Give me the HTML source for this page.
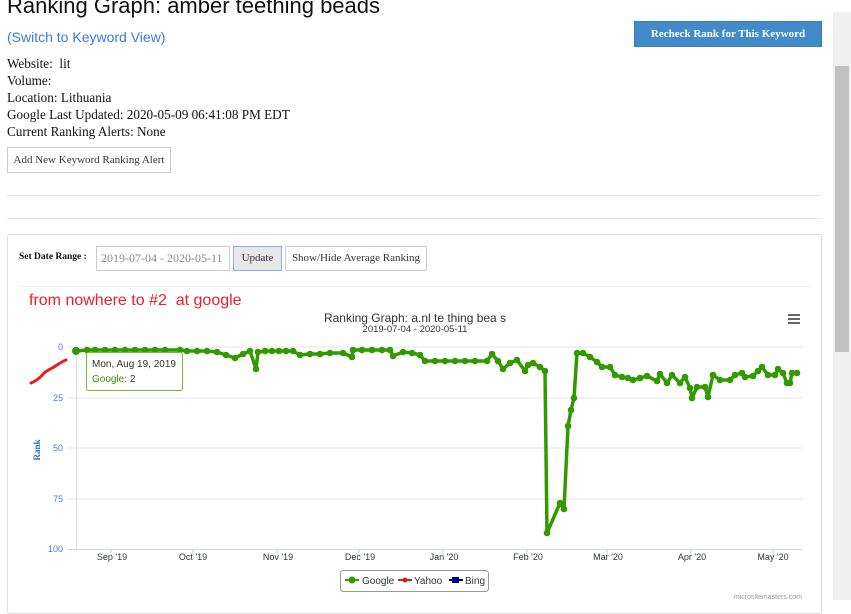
<!DOCTYPE html>
<html><head><meta charset="utf-8"><style>
html,body{margin:0;padding:0;width:851px;height:600px;overflow:hidden;background:#fff;font-family:"Liberation Serif",serif;color:#222}
.abs{position:absolute}
h1{position:absolute;left:7px;top:-7px;margin:0;font:22px "Liberation Sans",sans-serif;color:#111;white-space:nowrap}
.sw{left:7px;top:29px;font:14px "Liberation Sans",sans-serif;color:#3a7be0}
.info{left:7px;top:55px;font:13.2px/17px "Liberation Serif",serif;color:#111}
.btn{position:absolute;border:1px solid #ccc;background:#fff;font:11px "Liberation Serif",serif;color:#333;text-align:center;box-sizing:border-box}
.hr{position:absolute;left:7px;width:815px;height:1px;background:#e6e6e6}
.scroll{left:833px;top:12px;width:18px;height:588px;background:#f0f0f0}
.thumb{left:835px;top:66px;width:14px;height:286px;background:#c1c1c1}
</style></head><body>
<h1>Ranking Graph: amber teething beads</h1>
<div class="abs sw">(Switch to Keyword View)</div>
<div class="abs info">Website: &nbsp;lit<br>Volume: <br>Location: Lithuania<br>Google Last Updated: 2020-05-09 06:41:08 PM EDT<br>Current Ranking Alerts: None</div>
<div class="btn" style="left:7px;top:147px;width:164px;height:26px;line-height:24px;font-size:11px">Add New Keyword Ranking Alert</div>
<div class="abs" style="left:634px;top:21px;width:188px;height:26px;background:#428bca;border:1px solid #3a7db8;box-sizing:border-box;color:#fff;font:bold 11px 'Liberation Serif',serif;text-align:center;line-height:24px">Recheck Rank for This Keyword</div>
<div class="hr" style="top:195px"></div>
<div class="hr" style="top:218px"></div>
<div class="abs" style="left:7px;top:234px;width:815px;height:380px;border:1px solid #ddd;border-radius:3px;box-sizing:border-box"></div>
<div class="abs" style="left:19px;top:252px;font:bold 9.5px 'Liberation Serif',serif;color:#111">Set Date Range :</div>
<div class="abs" style="left:96px;top:246px;width:134px;height:25px;border:1px solid #ccc;box-sizing:border-box;font:12px 'Liberation Serif',serif;color:#888;line-height:23px;padding-left:4px">2019-07-04 - 2020-05-11</div>
<div class="btn" style="left:233px;top:246px;width:49px;height:25px;line-height:23px;background:#e8e8e8;border:1px solid #8ab0e0;font-size:11px">Update</div>
<div class="btn" style="left:285px;top:246px;width:142px;height:25px;line-height:23px;border-radius:2px;font-size:11px">Show/Hide Average Ranking</div>
<div class="hr" style="left:19px;width:791px;top:286px;background:#eee"></div>
<div class="abs" style="left:29px;top:292px;font:16px 'Liberation Sans',sans-serif;color:#e8202a">from nowhere to #2&nbsp; at google</div>
<div class="abs scroll"></div><div class="abs thumb"></div>
<svg class="abs" style="left:0;top:0" width="851" height="600">
<defs><marker id="d" markerUnits="userSpaceOnUse" markerWidth="8" markerHeight="8" refX="4" refY="4"><circle cx="4" cy="4" r="3.3" fill="#339900"/></marker></defs>
<text x="415" y="322" text-anchor="middle" font-family="Liberation Sans,sans-serif" font-size="12" fill="#333">Ranking Graph: a.nl  te  thing bea s</text>
<text x="415" y="332" text-anchor="middle" font-family="Liberation Sans,sans-serif" font-size="9.5" fill="#333">2019-07-04 - 2020-05-11</text>
<g fill="#666"><rect x="788" y="314" width="12" height="2"/><rect x="788" y="318" width="12" height="2"/><rect x="788" y="322" width="12" height="2"/></g>
<g stroke="#e6e6e6" stroke-width="1"><line x1="68" y1="347" x2="802" y2="347"/><line x1="68" y1="398" x2="802" y2="398"/><line x1="68" y1="448" x2="802" y2="448"/><line x1="68" y1="499" x2="802" y2="499"/></g>
<line x1="68" y1="549.5" x2="802" y2="549.5" stroke="#ccd6eb" stroke-width="1"/>
<line x1="76.5" y1="347" x2="76.5" y2="549" stroke="#ddd"/>
<g stroke="#ccd6eb"><line x1="111" y1="550" x2="111" y2="555"/><line x1="193" y1="550" x2="193" y2="555"/><line x1="277" y1="550" x2="277" y2="555"/><line x1="359" y1="550" x2="359" y2="555"/><line x1="443" y1="550" x2="443" y2="555"/><line x1="527" y1="550" x2="527" y2="555"/><line x1="607" y1="550" x2="607" y2="555"/><line x1="691" y1="550" x2="691" y2="555"/><line x1="773" y1="550" x2="773" y2="555"/></g>
<g font-family="Liberation Sans,sans-serif" font-size="9" fill="#4a7fd0" text-anchor="end"><text x="63" y="350">0</text><text x="63" y="401">25</text><text x="63" y="451">50</text><text x="63" y="502">75</text><text x="63" y="552">100</text></g>
<text transform="translate(40,450) rotate(-90)" text-anchor="middle" font-family="Liberation Serif,serif" font-weight="bold" font-size="9" fill="#2a6fc0">Rank</text>
<g font-family="Liberation Sans,sans-serif" font-size="9" fill="#333" text-anchor="middle"><text x="112" y="560">Sep '19</text><text x="193" y="560">Oct '19</text><text x="278" y="560">Nov '19</text><text x="360" y="560">Dec '19</text><text x="444" y="560">Jan '20</text><text x="528" y="560">Feb '20</text><text x="608" y="560">Mar '20</text><text x="692" y="560">Apr '20</text><text x="773" y="560">May '20</text></g>
<polyline fill="none" stroke="#339900" stroke-width="3.5" stroke-linejoin="round" marker-start="url(#d)" marker-mid="url(#d)" marker-end="url(#d)" points="76,351 87,350 95,350 105,350 115,350 125,350 135,350 145,350 155,350 165,350 180,350 187,351 197,351 207,351 217,352 226,355 235,358 243,354 250,351 256,369 258,352 265,351 272,351 279,351 286,351 293,351 300,355 310,354 320,354 330,353 343,353 352,357 353,350 362,350 372,350 382,350 390,350 393,356 403,352 412,353 420,355 425,361 435,361 445,361 455,361 465,361 475,361 487,361 492,354 498,361 503,369 510,363 517,360 525,371 528,365 533,363 540,367 545,371 547,533 560,503 564,509 568,426 571,410 574,398 577,353 583,353 590,357 597,362 602,367 610,367 615,375 622,377 628,378 633,380 640,378 647,376 657,381 660,374 667,383 672,375 680,383 685,377 690,388 692,398 697,387 705,387 708,397 713,375 720,380 730,380 735,375 742,373 745,377 753,376 758,371 762,367 768,375 775,375 778,369 783,373 787,383 790,383 792,373 797,373"/>
<circle cx="76" cy="351" r="4" fill="#339900"/>
<path d="M31,383 C36,381 40,378 44,373 C49,369 53,368 57,365 C60,363 63,361 66,360" stroke="#e02020" stroke-width="3" fill="none" stroke-linecap="round"/>
<rect x="86.5" y="352.5" width="96" height="38" rx="2" fill="#fff" fill-opacity="0.92" stroke="#7cb342"/>
<text x="92" y="367" font-family="Liberation Sans,sans-serif" font-size="10" fill="#333">Mon, Aug 19, 2019</text>
<text x="92" y="382" font-family="Liberation Sans,sans-serif" font-size="10" fill="#339900">Google: <tspan fill="#333">2</tspan></text>
<rect x="340.5" y="570.5" width="148" height="21" rx="3" fill="#fff" stroke="#999"/>
<g font-family="Liberation Sans,sans-serif" font-size="10" fill="#333">
<line x1="345" y1="580" x2="359" y2="580" stroke="#339900" stroke-width="2"/><circle cx="352" cy="580" r="3.5" fill="#339900"/><text x="362" y="584">Google</text>
<line x1="398" y1="580" x2="412" y2="580" stroke="#cc2222" stroke-width="2"/><circle cx="405" cy="580" r="2.5" fill="#cc2222"/><text x="414" y="584">Yahoo</text>
<line x1="449" y1="580" x2="463" y2="580" stroke="#000099" stroke-width="2"/><rect x="452" y="577" width="7" height="6" fill="#000099"/><text x="465" y="584">Bing</text></g>
<text x="802" y="599" text-anchor="end" font-family="Liberation Sans,sans-serif" font-size="7" fill="#999">microsltemasters.com</text>
</svg>
</body></html>
